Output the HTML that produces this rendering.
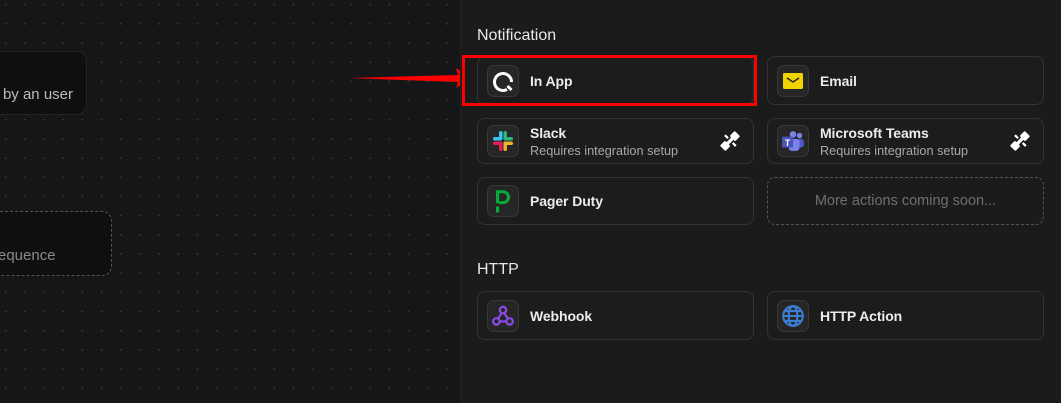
<!DOCTYPE html><html><head><style>
*{box-sizing:border-box;margin:0;padding:0}
body{width:1061px;height:403px;overflow:hidden;background:#151618;font-family:"Liberation Sans",sans-serif;position:relative}
.canvas{position:absolute;left:0;top:0;width:460px;height:403px;background-color:#151618;background-image:radial-gradient(circle,#35373b 0.7px,transparent 1.1px);background-size:19.2px 19.2px;background-position:-4px -5px}
.panel{position:absolute;left:460px;top:0;width:601px;height:403px;background:#1b1b1b;border-left:1px solid #26221f}
.node{position:absolute;background:#0f0f10;border-radius:10px;color:#bdbdbd;font-size:15px}
h3{position:absolute;color:#e8e8e8;font-size:16px;font-weight:500;left:477px}
.card{position:absolute;width:277px;border:1px solid #333;border-radius:8px;background:#1c1c1c}
.ic{position:absolute;left:9px;width:32px;height:32px;border:1px solid #383838;border-radius:7px;background:#262626;display:flex;align-items:center;justify-content:center}
.t{position:absolute;left:52px;color:#ececec;font-size:14px;font-weight:bold;letter-spacing:-0.1px}
.s{position:absolute;left:52px;color:#a8a8a8;font-size:12.7px}
.plug{position:absolute;right:12px;top:11px}
</style></head><body>
<div class="canvas"></div>
<div class="node" style="left:-20px;top:51px;width:107px;height:64px;border:1px solid #242424"><span style="position:absolute;right:13px;top:34px">by an user</span></div>
<div class="node" style="left:-20px;top:211px;width:132px;height:65px;border:1.5px dashed #555"><span style="position:absolute;left:17px;top:35px;color:#8a8a8a">equence</span></div>
<svg style="position:absolute;left:348px;top:68px" width="125" height="22"><polygon points="0,10 110,7 108,0 124,10 108,20 110,14" fill="#f00"/></svg>
<div class="panel"></div>
<h3 style="top:27px">Notification</h3>
<h3 style="top:261px">HTTP</h3>
<div class="card" style="left:477px;top:56px;height:49px"><div class="ic" style="top:8px"><svg width="24" height="24" viewBox="0 0 24 24"><path d="M16 20.5A8.5 8.5 0 1 1 20.5 13" fill="none" stroke="#fff" stroke-width="3"/><path d="M16.5 17L20.5 21" stroke="#fff" stroke-width="3"/></svg></div><div class="t" style="top:16px">In App</div></div>
<div style="position:absolute;left:462px;top:55px;width:295px;height:51px;border:3px solid #f00"></div>
<div class="card" style="left:767px;top:56px;height:49px"><div class="ic" style="top:8px"><svg width="22" height="18"><rect x="1" y="1" width="20" height="16" fill="#f0d400" rx="1.5"/><path d="M5 6l6 4 6-4" fill="none" stroke="#222" stroke-width="1.4"/></svg></div><div class="t" style="top:16px">Email</div></div>
<div class="card" style="left:477px;top:118px;height:46px"><div class="ic" style="top:6px"><svg width="22" height="22" viewBox="0 0 20 20" stroke-linecap="round" stroke-width="3.2"><path d="M8 2.5v5" stroke="#36c5f0"/><path d="M2.5 8h5" stroke="#36c5f0"/><path d="M12 2.5v5" stroke="#2eb67d"/><path d="M12 8h5.5" stroke="#2eb67d"/><path d="M12 12v5.5" stroke="#ecb22e"/><path d="M12 12h5.5" stroke="#ecb22e"/><path d="M8 12v5.5" stroke="#e01e5a"/><path d="M2.5 12h5" stroke="#e01e5a"/></svg></div><div class="t" style="top:6px">Slack</div><div class="s" style="top:25px">Requires integration setup</div><svg class="plug" width="22" height="22" viewBox="0 0 20 20"><g fill="#fff" transform="rotate(45 10 10)"><rect x="6.5" y="0.5" width="7" height="6.5" rx="1"/><rect x="6.5" y="13" width="7" height="6.5" rx="1"/><rect x="8.5" y="6" width="3" height="8"/><rect x="3" y="8.5" width="4" height="2"/><rect x="13" y="8.5" width="4" height="2"/></g></svg></div>
<div class="card" style="left:767px;top:118px;height:46px"><div class="ic" style="top:6px"><svg width="24" height="22" viewBox="0 0 22 20"><circle cx="17" cy="5" r="2.5" fill="#7b83eb"/><rect x="13" y="8" width="8" height="8" rx="3" fill="#5059c9"/><circle cx="11" cy="4" r="3" fill="#7b83eb"/><rect x="7" y="8" width="10" height="11" rx="3" fill="#7b83eb"/><rect x="1" y="6" width="10" height="10" rx="1" fill="#4b53bc"/><text x="6" y="14.5" font-size="8" fill="#fff" text-anchor="middle" font-family="Liberation Sans" font-weight="bold">T</text></svg></div><div class="t" style="top:6px">Microsoft Teams</div><div class="s" style="top:25px">Requires integration setup</div><svg class="plug" width="22" height="22" viewBox="0 0 20 20"><g fill="#fff" transform="rotate(45 10 10)"><rect x="6.5" y="0.5" width="7" height="6.5" rx="1"/><rect x="6.5" y="13" width="7" height="6.5" rx="1"/><rect x="8.5" y="6" width="3" height="8"/><rect x="3" y="8.5" width="4" height="2"/><rect x="13" y="8.5" width="4" height="2"/></g></svg></div>
<div class="card" style="left:477px;top:177px;height:48px"><div class="ic" style="top:7px"><svg width="18" height="24" viewBox="0 0 16 22"><path d="M3 13V2.5h5a5 5 0 0 1 0 10H4" fill="none" stroke="#06ac38" stroke-width="2.8"/><rect x="1.6" y="16" width="2.8" height="5.5" fill="#06ac38"/></svg></div><div class="t" style="top:15px">Pager Duty</div></div>
<div class="card" style="left:767px;top:177px;height:48px;border:1px dashed #555;background:transparent"><div style="position:absolute;width:100%;top:15px;text-align:center;color:#6f6f6f;font-size:14.5px">More actions coming soon...</div></div>
<div class="card" style="left:477px;top:291px;height:49px"><div class="ic" style="top:8px"><svg width="24" height="24" viewBox="0 0 20 20" fill="none" stroke="#8b4be8" stroke-width="1.8"><circle cx="10" cy="5" r="2.7"/><circle cx="4.5" cy="14.5" r="2.7"/><circle cx="15.5" cy="14.5" r="2.7"/><path d="M9 7.5L5.5 12.5M7 14.5h6M11 7.5l3.2 5"/></svg></div><div class="t" style="top:16px">Webhook</div></div>
<div class="card" style="left:767px;top:291px;height:49px"><div class="ic" style="top:8px"><svg width="24" height="24" viewBox="0 0 22 22" fill="none" stroke="#3b7fd4" stroke-width="1.9"><circle cx="11" cy="11" r="9"/><ellipse cx="11" cy="11" rx="4" ry="9"/><path d="M2 11h18M3.5 6.5h15M3.5 15.5h15"/></svg></div><div class="t" style="top:16px">HTTP Action</div></div>
</body></html>
